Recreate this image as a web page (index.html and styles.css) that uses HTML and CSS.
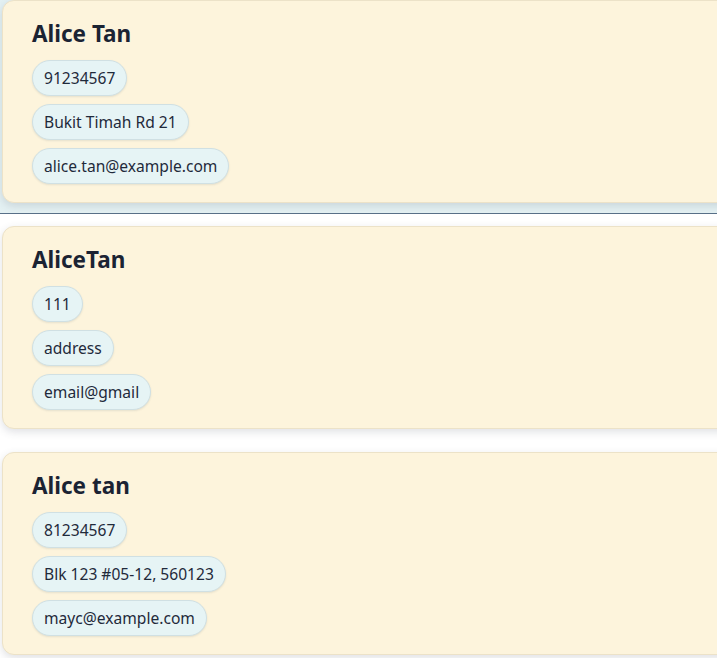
FILE: index.html
```html
<!DOCTYPE html>
<html>
<head>
<meta charset="utf-8">
<link rel="stylesheet" href="styles.css">
</head>
<body>
<div class="list">
  <div class="item selected">
    <div class="card">
      <div class="name">Alice Tan</div>
      <div class="chips">
        <span class="chip">91234567</span>
        <span class="chip">Bukit Timah Rd 21</span>
        <span class="chip">alice.tan@example.com</span>
      </div>
    </div>
  </div>
  <div class="item">
    <div class="card">
      <div class="name">AliceTan</div>
      <div class="chips">
        <span class="chip">111</span>
        <span class="chip">address</span>
        <span class="chip">email@gmail</span>
      </div>
    </div>
  </div>
  <div class="item">
    <div class="card">
      <div class="name">Alice tan</div>
      <div class="chips">
        <span class="chip">81234567</span>
        <span class="chip">Blk 123 #05-12, 560123</span>
        <span class="chip">mayc@example.com</span>
      </div>
    </div>
  </div>
</div>
</body>
</html>
```
FILE: styles.css
```css
html, body {
  margin: 0;
  padding: 0;
  background: #ffffff;
  overflow: hidden;
}
body {
  font-family: "Noto Sans", "Open Sans", sans-serif;
  color: #1d2838;
}
.list {
  margin-top: -12px;
  width: 740px;
}
.item {
  padding: 12px 0 10px 2px;
  border-bottom: 1px solid transparent;
}
.item.selected {
  background: #e4f1f3;
  border-bottom: 1px solid #587088;
}
.card {
  background: #fdf4dc;
  border: 1px solid #ece2c8;
  border-radius: 12px;
  box-shadow: 0 3px 8px rgba(60, 70, 90, 0.16);
  padding: 19px 0 17px 29px;
  box-sizing: border-box;
  height: 203px;
}
.name {
  font-size: 22.5px;
  font-weight: 700;
  line-height: 28px;
  color: #1b2333;
}
.chips {
  display: flex;
  flex-direction: column;
  align-items: flex-start;
  gap: 8px;
  margin-top: 12px;
}
.chip {
  display: inline-block;
  background: #e6f4f5;
  border: 1px solid #d0e0e3;
  border-radius: 18px;
  padding: 0 11px;
  height: 36px;
  line-height: 34px;
  box-sizing: border-box;
  font-size: 15.6px;
  color: #1f2a3b;
  box-shadow: 0 1px 2px rgba(60, 80, 100, 0.12);
}
```
